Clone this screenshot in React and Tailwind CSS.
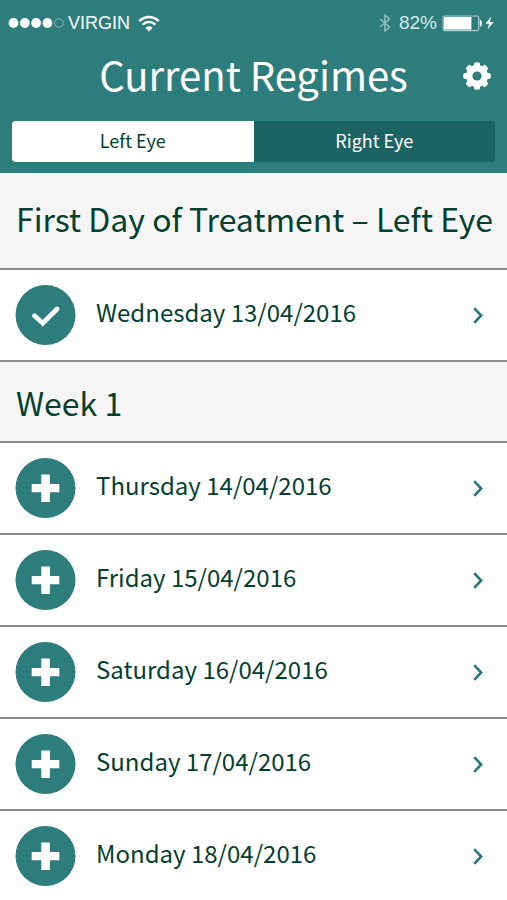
import { useState } from "react";

const firstDay = { day: "Wednesday", date: "13/04/2016", done: true };

const weekOne = [
  { day: "Thursday", date: "14/04/2016", done: false },
  { day: "Friday", date: "15/04/2016", done: false },
  { day: "Saturday", date: "16/04/2016", done: false },
  { day: "Sunday", date: "17/04/2016", done: false },
  { day: "Monday", date: "18/04/2016", done: false },
];

function StatusBar() {
  return (
    <div className="flex items-center justify-between pl-2 pr-3 h-[46px] font-['Liberation_Sans',sans-serif]">
      <div className="flex items-center">
        <svg width="56" height="12" viewBox="0 0 56 12" aria-hidden="true">
          <g fill="#fff">
            <circle cx="5.5" cy="6" r="4.9" />
            <circle cx="16.8" cy="6" r="4.9" />
            <circle cx="28.1" cy="6" r="4.9" />
            <circle cx="39.4" cy="6" r="4.9" />
          </g>
          <circle cx="50.8" cy="6" r="4.3" fill="none" stroke="#8fbcbc" strokeWidth="1" />
        </svg>
        <span className="ml-1 text-lg">VIRGIN</span>
        <svg className="ml-2" width="22" height="17" viewBox="0 0 22 17" fill="none" stroke="#fff" aria-hidden="true">
          <path d="M1.2 6.2C6.8.5 15.2.5 20.8 6.2" strokeWidth="2.4" />
          <path d="M4.6 9.7c3.8-3.8 9-3.8 12.8 0" strokeWidth="2.4" />
          <path d="M11 16.5 7.4 12.8c2.2-2 5-2 7.2 0z" fill="#fff" stroke="none" />
        </svg>
      </div>
      <div className="flex items-center">
        <svg width="12" height="18" viewBox="0 0 12 18" fill="none" stroke="#8fbcbc" strokeWidth="1.5" aria-hidden="true">
          <path d="M1 5l9.5 8L6 17V1l4.5 4L1 13" />
        </svg>
        <span className="ml-2 text-[19px] text-[#d5eaea]">82%</span>
        <svg className="ml-1" width="54" height="18" viewBox="0 0 54 18" aria-hidden="true">
          <rect x="2.1" y="2" width="35.6" height="14.6" rx="1.5" fill="none" stroke="#a9d0d0" strokeWidth="1.2" />
          <rect x="3" y="3" width="27.4" height="12.6" fill="#fff" />
          <path d="M38.8 5.5c3 .7 3 6.9 0 7.6z" fill="#e4f2f2" />
          <path d="M50.4 2.5l-6 7.3h3.8l-1.7 5.8 6.3-7.7h-4z" fill="#fff" />
        </svg>
      </div>
    </div>
  );
}

function GearIcon() {
  return (
    <svg width="28" height="28" viewBox="0 0 28 28" aria-hidden="true">
      <g fill="#fff">
        <rect x="11" y="0.3" width="6" height="27.4" rx="1.8" />
        <rect x="11" y="0.3" width="6" height="27.4" rx="1.8" transform="rotate(45 14 14)" />
        <rect x="11" y="0.3" width="6" height="27.4" rx="1.8" transform="rotate(90 14 14)" />
        <rect x="11" y="0.3" width="6" height="27.4" rx="1.8" transform="rotate(135 14 14)" />
        <circle cx="14" cy="14" r="11" />
      </g>
      <circle cx="14" cy="14" r="4.6" fill="#2d7d7d" />
    </svg>
  );
}

function SectionTitle({ children, className }) {
  return (
    <h2 className={`flex items-center border-b-2 border-[#8c8c8c] bg-[#f5f5f5] pl-4 pr-2 text-[32px] leading-10 ${className}`}>
      {children}
    </h2>
  );
}

function DayRow({ day, date, done }) {
  return (
    <li className="flex items-center border-b-2 border-[#8c8c8c] py-[15px] pl-[15px] pr-6">
      <button
        type="button"
        aria-label={`${done ? "Completed" : "Add"} ${day}`}
        className="shrink-0 cursor-pointer"
      >
        <svg width="61" height="60" viewBox="0 0 61 60" aria-hidden="true">
          <circle cx="30.5" cy="30" r="30" fill="#2d7d7d" />
          {done ? (
            <path d="M19.5 30.8 27.8 38.2 42 24" fill="none" stroke="#fff" strokeWidth="4.8" strokeLinecap="round" />
          ) : (
            <path d="M26.3 16.5h8.6v9.6h9.4v8.2h-9.4V44h-8.6v-9.7h-9.6v-8.2h9.6z" fill="#fff" />
          )}
        </svg>
      </button>
      <a href="#regime" className="flex flex-1 items-center justify-between pl-5">
        <span className="pb-1.5 text-2xl">
          {day} {date}
        </span>
        <svg width="10" height="17" viewBox="0 0 10 17" fill="none" stroke="#267683" strokeWidth="2.6" aria-hidden="true">
          <path d="M1.2 1.2 8.2 8.5 1.2 15.8" />
        </svg>
      </a>
    </li>
  );
}

export default function App() {
  const [eye, setEye] = useState("Left");

  return (
    <div className="min-h-screen bg-white font-['Noto_Sans_CJK_SC',sans-serif] text-[#04402f]">
      <header className="bg-[#2d7d7d] pb-[11px] text-white">
        <StatusBar />
        <div className="grid h-[75px] grid-cols-[1fr_auto_1fr] items-center px-4">
          <h1 className="col-start-2 pb-5 text-[40px] leading-12">Current Regimes</h1>
          <button type="button" aria-label="Settings" className="mb-4 cursor-pointer justify-self-end">
            <GearIcon />
          </button>
        </div>
        <div className="mx-3 flex overflow-hidden rounded-sm">
          {["Left", "Right"].map((side) => (
            <button
              key={side}
              type="button"
              aria-pressed={eye === side}
              onClick={() => setEye(side)}
              className={`h-[41px] flex-1 cursor-pointer pb-1 text-lg ${
                eye === side ? "bg-white text-[#04402f]" : "bg-[#1c6464] text-white"
              }`}
            >
              {side} Eye
            </button>
          ))}
        </div>
      </header>

      <main>
        <SectionTitle className="min-h-[97px] pb-1.5">First Day of Treatment – {eye} Eye</SectionTitle>
        <ul>
          <DayRow {...firstDay} />
        </ul>
        <SectionTitle className="min-h-[81px]">Week 1</SectionTitle>
        <ul>
          {weekOne.map((item) => (
            <DayRow key={item.date} {...item} />
          ))}
        </ul>
      </main>
    </div>
  );
}
